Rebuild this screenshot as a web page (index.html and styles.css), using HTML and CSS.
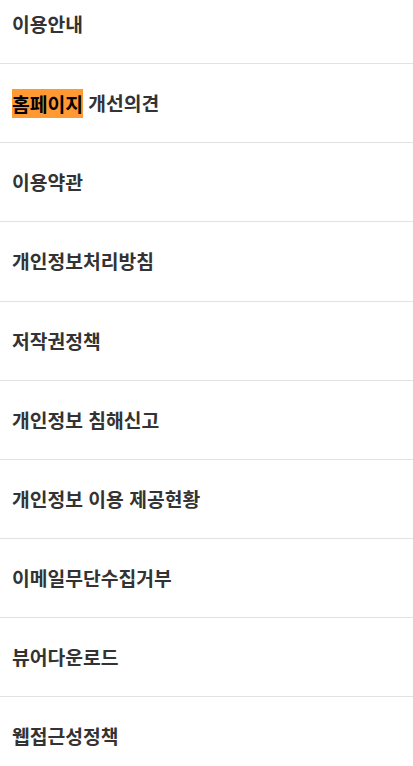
FILE: index.html
```html
<!DOCTYPE html>
<html lang="ko">
<head>
<meta charset="utf-8">
<link rel="stylesheet" href="styles.css">
</head>
<body>
<ul class="menu">
  <li class="item"><a href="#">이용안내</a></li>
  <li class="item"><a href="#"><span class="hl">홈페이지</span> 개선의견</a></li>
  <li class="item"><a href="#">이용약관</a></li>
  <li class="item"><a href="#">개인정보처리방침</a></li>
  <li class="item"><a href="#">저작권정책</a></li>
  <li class="item"><a href="#">개인정보 침해신고</a></li>
  <li class="item"><a href="#">개인정보 이용 제공현황</a></li>
  <li class="item"><a href="#">이메일무단수집거부</a></li>
  <li class="item"><a href="#">뷰어다운로드</a></li>
  <li class="item"><a href="#">웹접근성정책</a></li>
</ul>
</body>
</html>
```
FILE: styles.css
```css
html, body {
  margin: 0;
  padding: 0;
  background: #fff;
}
body {
  font-family: "Noto Sans CJK KR", "Noto Sans", sans-serif;
  overflow: hidden;
}
.menu {
  list-style: none;
  margin: -15px 0 0 0;
  padding: 0;
}
.item {
  height: 78.125px;
  border-bottom: 1px solid #e2e2e2;
  display: flex;
  align-items: center;
  padding: 0 12px;
}
.item a {
  color: #333;
  text-decoration: none;
  font-size: 19.3px;
  font-weight: 700;
}
.hl {
  background: #ff9933;
  color: #000;
  padding: 0.5px 0;
}
```
